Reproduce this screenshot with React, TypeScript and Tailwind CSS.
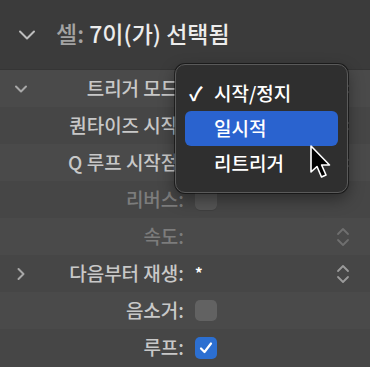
import { ReactNode } from 'react';

const font = { fontFamily: '"Noto Sans CJK KR", "Noto Sans", sans-serif' };

function Stepper({ dim }: { dim?: boolean }) {
  return (
    <svg width="14" height="22" viewBox="0 0 14 22" className={dim ? 'text-[#6f6f6f]' : 'text-[#9a9a9a]'}>
      <path d="M2 8 L7 3 L12 8" fill="none" stroke="currentColor" strokeWidth="1.8" strokeLinecap="round" strokeLinejoin="round" />
      <path d="M2 14 L7 19 L12 14" fill="none" stroke="currentColor" strokeWidth="1.8" strokeLinecap="round" strokeLinejoin="round" />
    </svg>
  );
}

function Box({ checked, dim }: { checked?: boolean; dim?: boolean }) {
  if (checked) {
    return (
      <div className="w-[22px] h-[22px] rounded-[5px] bg-[#2c6fd1] flex items-center justify-center">
        <svg width="16" height="16" viewBox="0 0 16 16">
          <path d="M3 8.5 L6.5 12 L13 3.5" fill="none" stroke="white" strokeWidth="2.2" strokeLinecap="round" strokeLinejoin="round" />
        </svg>
      </div>
    );
  }
  return <div className={`w-[22px] h-[22px] rounded-[5px] ${dim ? 'bg-[#555555]' : 'bg-[#626262]'} shadow-[inset_0_-1px_0_rgba(0,0,0,0.25)]`} />;
}

function Row({ label, dim, chevron, children, stripe }: { label: string; dim?: boolean; chevron?: 'down' | 'right'; children?: ReactNode; stripe?: boolean }) {
  return (
    <div className={`h-[37px] flex items-center ${stripe ? 'bg-[#4a4a4a]' : 'bg-[#464646]'}`}>
      <div className="w-[40px] flex justify-center pl-[2px]">
        {chevron === 'down' && (
          <svg width="14" height="10" viewBox="0 0 14 10">
            <path d="M2 2.5 L7 7.5 L12 2.5" fill="none" stroke="#a8a8a8" strokeWidth="2" strokeLinecap="round" strokeLinejoin="round" />
          </svg>
        )}
        {chevron === 'right' && (
          <svg width="10" height="14" viewBox="0 0 10 14">
            <path d="M2.5 2 L7.5 7 L2.5 12" fill="none" stroke="#a8a8a8" strokeWidth="2" strokeLinecap="round" strokeLinejoin="round" />
          </svg>
        )}
      </div>
      <div className={`w-[144px] text-right text-[19px] font-medium whitespace-nowrap ${dim ? 'text-[#7c7c7c]' : 'text-[#c8c8c8]'}`}>{label}</div>
      <div className="flex-1 flex items-center justify-between pl-[11px] pr-[20px]">{children}</div>
    </div>
  );
}

export default function App() {
  return (
    <div className="relative w-[370px] h-[367px] overflow-hidden bg-[#464646]" style={font}>
      <div className="h-[70px] bg-[#3b3b3b] border-b border-[#353535] flex items-center pl-[18px] gap-[20px]">
        <svg width="18" height="12" viewBox="0 0 18 12">
          <path d="M2 2.5 L9 9.5 L16 2.5" fill="none" stroke="#bdbdbd" strokeWidth="2" strokeLinecap="round" strokeLinejoin="round" />
        </svg>
        <div className="text-[23px] font-medium -mt-[3px]">
          <span className="text-[#a3a3a3]">셀: </span>
          <span className="text-[#ececec]">7이(가) 선택됨</span>
        </div>
      </div>
      <Row label="트리거 모드:" chevron="down" stripe>
        <span />
        <Stepper />
      </Row>
      <Row label="퀀타이즈 시작:">
        <span />
        <Stepper />
      </Row>
      <Row label="Q 루프 시작점:" stripe>
        <span />
        <Stepper />
      </Row>
      <Row label="리버스:" dim>
        <Box dim />
      </Row>
      <Row label="속도:" dim stripe>
        <span />
        <Stepper dim />
      </Row>
      <Row label="다음부터 재생:" chevron="right">
        <span className="text-white text-[15px] font-bold">*</span>
        <Stepper />
      </Row>
      <Row label="음소거:" stripe>
        <Box />
      </Row>
      <Row label="루프:">
        <Box checked />
      </Row>

      <div className="absolute left-[175px] top-[64px] w-[173px] h-[129px] rounded-[10px] bg-[#2f2f2f] border border-[#5a5a5a] shadow-[0_0_0_1px_rgba(0,0,0,0.5),0_6px_16px_rgba(0,0,0,0.4)] px-[9px] py-[11px] flex flex-col text-[19px] font-medium text-white">
        <div className="h-[36px] flex items-center">
          <span className="w-[29px] pl-[4px] text-[19px] font-bold">✓</span>
          <span>시작/정지</span>
        </div>
        <div className="h-[36px] flex items-center rounded-[6px] bg-[#2a63cf] pl-[29px]">일시적</div>
        <div className="h-[36px] flex items-center pl-[29px]">리트리거</div>
      </div>

      <svg className="absolute left-[309px] top-[144px]" width="26" height="38" viewBox="0 0 26 38">
        <path d="M2 2 L2 28 L8 22.5 L12.5 33 L17 31 L12.6 21 L20.5 21 Z" fill="black" stroke="white" strokeWidth="1.6" strokeLinejoin="round" />
      </svg>
    </div>
  );
}
